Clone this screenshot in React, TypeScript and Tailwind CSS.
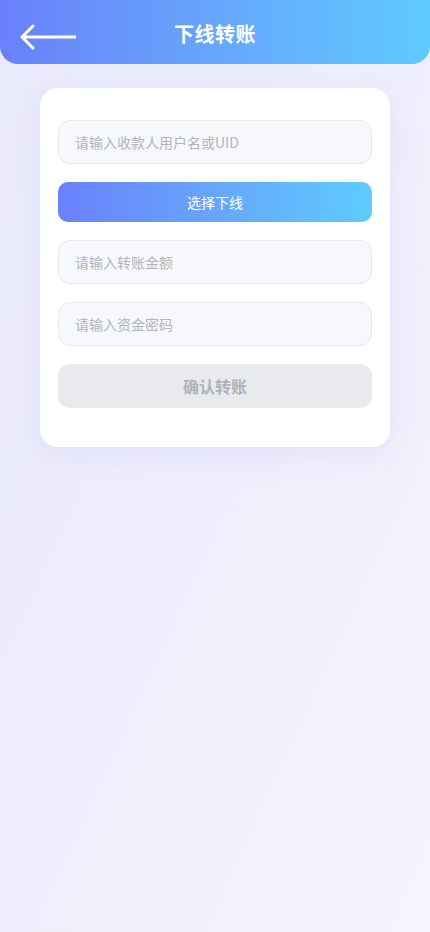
import React from 'react';

export default function App() {
  return (
    <div
      className="min-h-[932px] w-full bg-gradient-to-br from-[#e9eafb] via-[#eeeefc] to-[#f5f5fd]"
      style={{ fontFamily: '"Noto Sans CJK SC", "Noto Sans", sans-serif' }}
    >
      {/* Header */}
      <header className="relative h-[64px] flex items-center justify-center rounded-b-[18px] bg-gradient-to-r from-[#6a80fb] to-[#5ecbfd]">
        <button className="absolute left-[20px] top-[24px] text-white">
          <svg width="56" height="26" viewBox="0 0 56 26" fill="none">
            <path d="M55 13H3M13 2L2 13L13 24" stroke="white" strokeWidth="3" strokeLinecap="round" strokeLinejoin="round" />
          </svg>
        </button>
        <h1 className="text-white text-[20px] font-bold tracking-wide mt-[3px]">下线转账</h1>
      </header>

      {/* Card */}
      <div className="mx-[40px] mt-[24px] bg-white rounded-[18px] shadow-[0_8px_30px_rgba(120,130,220,0.12)] px-[18px] pt-[32px] pb-[39px] flex flex-col gap-[18px]">
        <input
          className="h-[44px] w-full rounded-[12px] border border-[#e8e9ef] bg-[#f7f8fb] px-[16px] text-[14px] text-[#333] placeholder:text-[#b2b4bc] outline-none"
          placeholder="请输入收款人用户名或UID"
        />
        <button className="h-[40px] w-full rounded-[10px] bg-gradient-to-r from-[#6a80fb] to-[#5ecbfd] text-white text-[14px]">
          选择下线
        </button>
        <input
          className="h-[44px] w-full rounded-[12px] border border-[#e8e9ef] bg-[#f7f8fb] px-[16px] text-[14px] text-[#333] placeholder:text-[#b2b4bc] outline-none"
          placeholder="请输入转账金额"
        />
        <input
          type="password"
          className="h-[44px] w-full rounded-[12px] border border-[#e8e9ef] bg-[#f7f8fb] px-[16px] text-[14px] text-[#333] placeholder:text-[#b2b4bc] outline-none"
          placeholder="请输入资金密码"
        />
        <button className="h-[44px] w-full rounded-[12px] bg-[#e8eaee] text-[#b0b2bb] text-[16px] font-bold">
          确认转账
        </button>
      </div>
    </div>
  );
}
